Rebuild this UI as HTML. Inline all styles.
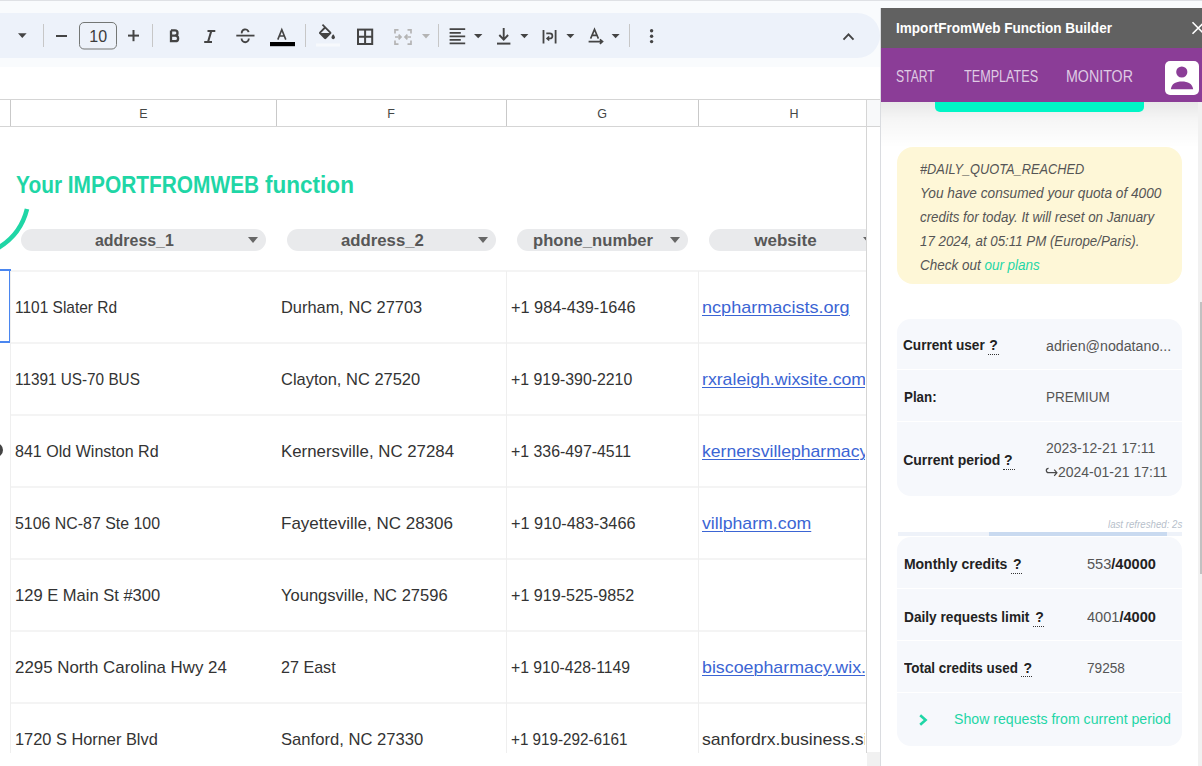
<!DOCTYPE html>
<html><head><meta charset="utf-8">
<style>
html,body{margin:0;padding:0}
body{width:1202px;height:766px;position:relative;overflow:hidden;background:#fff;font-family:"Liberation Sans",sans-serif;}
.a{position:absolute}
.t{position:absolute;white-space:nowrap;line-height:1;transform-origin:0 0}
.ic{position:absolute;overflow:visible}
.hl{position:absolute;height:2px;background:#f4f4f4}
.vl{position:absolute;width:1px;background:#efefef}
.lnk{text-decoration:underline;text-decoration-thickness:1px;text-underline-offset:2px}
.pill{position:absolute;top:229px;height:22px;border-radius:11px;background:#e9eaec}
.ptri{position:absolute;top:237px;width:0;height:0;border-left:5.5px solid transparent;border-right:5.5px solid transparent;border-top:6px solid #666}
</style></head>
<body>
<div class="a" style="left:0;top:0;width:1202px;height:67px;background:#f9fbfd"></div>
<div class="a" style="left:0;top:0;width:1202px;height:1px;background:#dfe1e5"></div>
<div class="a" style="left:-40px;top:13px;width:920px;height:45px;border-radius:23px;background:#edf2fa"></div>
<svg class="ic" style="left:0;top:0" width="880" height="67" viewBox="0 0 880 67">
<g fill="#444">
<polygon points="18,33.2 26.6,33.2 22.3,38"/>
<rect x="56" y="35" width="11" height="2"/>
<rect x="128" y="34.6" width="11" height="2"/>
<rect x="132.5" y="30" width="2" height="11.2"/>
<polygon points="474,34 482.4,34 478.2,38.2"/>
<polygon points="520.4,34 528.4,34 524.4,38.2"/>
<polygon points="566.4,34 574.4,34 570.4,38.2"/>
<polygon points="611.6,34 619.6,34 615.6,38.2"/>
<circle cx="651.6" cy="30.8" r="1.7"/><circle cx="651.6" cy="36.2" r="1.7"/><circle cx="651.6" cy="41.6" r="1.7"/>
</g>
<g fill="#c7c7c7"><rect x="43" y="24" width="1" height="23"/><rect x="152" y="24" width="1" height="23"/><rect x="305" y="24" width="1" height="23"/><rect x="438" y="24" width="1" height="23"/><rect x="629" y="24" width="1" height="23"/></g>
<rect x="79.5" y="22.5" width="37" height="26.5" rx="4.5" fill="none" stroke="#747775" stroke-width="1"/>
<text x="89.3" y="41.6" font-family="Liberation Sans" font-size="16" fill="#3c3c3c">10</text>
<g fill="none" stroke="#444" stroke-width="2.3">
<path d="M171 30.4 V41.1 H175.4 A2.72 2.72 0 0 0 175.4 35.65 H171 M171 30.4 H174.9 A2.62 2.62 0 0 1 174.9 35.65"/>
</g>
<g fill="none" stroke="#444" stroke-width="2">
<path d="M207.5 30.9 H215.3 M204.2 42.1 H212 M211.3 30.9 L208 42.1"/>
<path d="M236.3 35.6 H254.5" stroke-width="1.8"/>
<path d="M241.8 33.4 A3.4 3.3 0 0 1 248.6 32.2" stroke-width="1.9"/>
<path d="M241.6 38.6 A3.6 3.6 0 0 0 248.8 38.6" stroke-width="1.9"/>
<path d="M277.8 39.6 L281.8 29.6 L285.8 39.6 M279.3 36 H284.3" stroke-width="1.6"/>
<rect x="358" y="29.6" width="14.2" height="14.4" />
<path d="M365.1 29.6 V44 M358 36.8 H372.2"/>
<path d="M449.6 29.2 H465.2 M449.6 32.8 H460.8 M449.6 36.3 H465.2 M449.6 39.8 H460.8 M449.6 43.3 H465.2" stroke-width="1.8"/>
<path d="M503.7 28 V39.5 M499.3 35 L503.7 39.6 L508.1 35" stroke-width="1.9"/>
<path d="M497 43.6 H510.4" stroke-width="2"/>
<path d="M543.5 30 V43.4 M555.6 30 V43.4" stroke-width="1.8"/>
<path d="M546.3 33.3 H549.8 A2.6 2.6 0 0 1 549.8 38.5 H547.2 M549.2 36.5 L547.1 38.5 L549.2 40.5" stroke-width="1.7"/>
<path d="M590.6 38.6 L594.5 29.4 L598.4 38.6 M592 35.4 H597" stroke-width="1.6"/>
<path d="M588.6 41.6 H602.2 M599.9 39.3 L602.5 41.6 L599.9 43.9" stroke-width="1.7"/>
<path d="M843.5 39.6 L848.5 34.4 L853.5 39.6" stroke-width="1.9"/>
</g>
<rect x="270" y="42" width="25" height="4.2" fill="#000"/>
<rect x="316" y="43.5" width="24" height="3" fill="#f7f9fc"/>
<g transform="translate(316.3,24) scale(0.89)" fill="#444"><path d="M16.56 8.94L7.62 0 6.21 1.41l2.38 2.38-5.15 5.15c-.59.59-.59 1.54 0 2.12l5.5 5.5c.29.29.68.44 1.06.44s.77-.15 1.06-.44l5.5-5.5c.59-.58.59-1.53 0-2.12zM5.21 10L10 5.21 14.79 10H5.21zM19 11.5s-2 2.17-2 3.5c0 1.1.9 2 2 2s2-.9 2-2c0-1.33-2-3.5-2-3.5z"/></g>
<g fill="none" stroke="#b4b4b4" stroke-width="1.7">
<path d="M398.5 29.8 H395 V33.5 M395 40.5 V44.2 H398.5 M407.5 29.8 H411 V33.5 M411 40.5 V44.2 H407.5"/>
<path d="M395 37 H401 M398.6 34.6 L401 37 L398.6 39.4 M411 37 H405 M407.4 34.6 L405 37 L407.4 39.4"/>
</g>
<polygon points="422,34 430,34 426,38.4" fill="#b4b4b4"/>
</svg>
<div class="a" style="left:0;top:99px;width:880px;height:1px;background:#d5d5d5"></div>
<div class="a" style="left:0;top:126px;width:880px;height:1px;background:#d5d5d5"></div>
<div class="a" style="left:867px;top:100px;width:13px;height:26px;background:#f8f9fa"></div>
<div class="a" style="left:10px;top:100px;width:1px;height:26px;background:#c9c9c9"></div>
<div class="a" style="left:276px;top:100px;width:1px;height:26px;background:#c9c9c9"></div>
<div class="a" style="left:506px;top:100px;width:1px;height:26px;background:#c9c9c9"></div>
<div class="a" style="left:698px;top:100px;width:1px;height:26px;background:#c9c9c9"></div>
<div class="a" style="left:866px;top:100px;width:1px;height:653px;background:#d5d5d5"></div>
<div class="a" style="left:867px;top:752px;width:13px;height:14px;background:#f1f1f1"></div>
<div class="a" style="left:93.5px;top:107.5px;width:100px;text-align:center;font-size:12.5px;line-height:1;color:#444746">E</div>
<div class="a" style="left:341px;top:107.5px;width:100px;text-align:center;font-size:12.5px;line-height:1;color:#444746">F</div>
<div class="a" style="left:552px;top:107.5px;width:100px;text-align:center;font-size:12.5px;line-height:1;color:#444746">G</div>
<div class="a" style="left:744px;top:107.5px;width:100px;text-align:center;font-size:12.5px;line-height:1;color:#444746">H</div>
<div class="a" style="left:0;top:127px;width:866px;height:626px;overflow:hidden">
<div class="a" style="left:0;top:-127px;width:866px;height:766px">
<svg class="ic" style="left:0;top:180px" width="60" height="90" viewBox="0 180 60 90"><path d="M27 209 A62.5 62.5 0 0 1 -3 248.5" fill="none" stroke="#1fd6a6" stroke-width="4.6"/></svg>
<div class="t" style="left:15.70px;top:173.74px;font-size:22px;color:#1fd6a6;font-weight:bold;transform:scale(0.9490,1.0700);">Your IMPORTFROMWEB</div>
<div class="t" style="left:265.00px;top:173.74px;font-size:22px;color:#1fd6a6;font-weight:bold;transform:scale(1.0250,1.0700);">function</div>
<div class="pill" style="left:21px;width:245px"></div>
<div class="t" style="left:94.55px;top:232.20px;font-size:17px;color:#575757;font-weight:bold;transform:scale(0.9370,1.0000);">address_1</div>
<div class="ptri" style="left:247.5px"></div>
<div class="pill" style="left:287px;width:209px"></div>
<div class="t" style="left:340.53px;top:232.20px;font-size:17px;color:#575757;font-weight:bold;transform:scale(0.9850,1.0000);">address_2</div>
<div class="ptri" style="left:477.5px"></div>
<div class="pill" style="left:517px;width:171px"></div>
<div class="t" style="left:533.10px;top:232.20px;font-size:17px;color:#575757;font-weight:bold;transform:scale(0.9780,1.0000);">phone_number</div>
<div class="ptri" style="left:669.5px"></div>
<div class="pill" style="left:709px;width:172px"></div>
<div class="t" style="left:754.30px;top:232.20px;font-size:17px;color:#575757;font-weight:bold;">website</div>
<div class="ptri" style="left:862.5px"></div>
<div class="a" style="left:-10px;top:269px;width:19px;height:70px;border:2px solid #4a86f0;border-left:none"></div>
<div class="a" style="left:-11px;top:443px;width:14px;height:14px;border-radius:50%;background:#444"></div>
<div class="hl" style="left:11px;top:270px;width:855px"></div>
<div class="hl" style="left:11px;top:342px;width:855px"></div>
<div class="hl" style="left:11px;top:414px;width:855px"></div>
<div class="hl" style="left:11px;top:486px;width:855px"></div>
<div class="hl" style="left:11px;top:558px;width:855px"></div>
<div class="hl" style="left:11px;top:630px;width:855px"></div>
<div class="hl" style="left:11px;top:702px;width:855px"></div>
<div class="vl" style="left:10px;top:271px;height:482px"></div>
<div class="vl" style="left:506px;top:271px;height:482px"></div>
<div class="vl" style="left:698px;top:271px;height:482px"></div>
<div class="t" style="left:14.50px;top:299.00px;font-size:17px;color:#333333;transform:scale(0.9100,1.0000);">1101 Slater Rd</div>
<div class="t" style="left:281.00px;top:299.00px;font-size:17px;color:#333333;transform:scale(0.9640,1.0000);">Durham, NC 27703</div>
<div class="t" style="left:510.50px;top:299.00px;font-size:17px;color:#333333;transform:scale(0.9580,1.0000);">+1 984-439-1646</div>
<div class="a" style="left:698px;top:0;width:167px;height:766px;overflow:hidden"><div class="a" style="left:-698px;top:0;width:866px;height:766px">
<div class="t lnk" style="left:702.40px;top:299.00px;font-size:17px;color:#3b65d4;transform:scale(1.0630,1.0000);">ncpharmacists.org</div>
</div></div>
<div class="t" style="left:14.50px;top:371.00px;font-size:17px;color:#333333;transform:scale(0.9010,1.0000);">11391 US-70 BUS</div>
<div class="t" style="left:281.00px;top:371.00px;font-size:17px;color:#333333;transform:scale(0.9690,1.0000);">Clayton, NC 27520</div>
<div class="t" style="left:510.50px;top:371.00px;font-size:17px;color:#333333;transform:scale(0.9330,1.0000);">+1 919-390-2210</div>
<div class="a" style="left:698px;top:0;width:167px;height:766px;overflow:hidden"><div class="a" style="left:-698px;top:0;width:866px;height:766px">
<div class="t lnk" style="left:702.40px;top:371.00px;font-size:17px;color:#3b65d4;transform:scale(1.0400,1.0000);">rxraleigh.wixsite.com</div>
</div></div>
<div class="t" style="left:14.50px;top:443.00px;font-size:17px;color:#333333;transform:scale(0.9440,1.0000);">841 Old Winston Rd</div>
<div class="t" style="left:281.00px;top:443.00px;font-size:17px;color:#333333;transform:scale(0.9900,1.0000);">Kernersville, NC 27284</div>
<div class="t" style="left:510.50px;top:443.00px;font-size:17px;color:#333333;transform:scale(0.9330,1.0000);">+1 336-497-4511</div>
<div class="a" style="left:698px;top:0;width:167px;height:766px;overflow:hidden"><div class="a" style="left:-698px;top:0;width:866px;height:766px">
<div class="t lnk" style="left:702.40px;top:443.00px;font-size:17px;color:#3b65d4;transform:scale(1.0350,1.0000);">kernersvillepharmacy.com</div>
</div></div>
<div class="t" style="left:14.50px;top:515.00px;font-size:17px;color:#333333;transform:scale(0.9360,1.0000);">5106 NC-87 Ste 100</div>
<div class="t" style="left:281.00px;top:515.00px;font-size:17px;color:#333333;">Fayetteville, NC 28306</div>
<div class="t" style="left:510.50px;top:515.00px;font-size:17px;color:#333333;transform:scale(0.9580,1.0000);">+1 910-483-3466</div>
<div class="a" style="left:698px;top:0;width:167px;height:766px;overflow:hidden"><div class="a" style="left:-698px;top:0;width:866px;height:766px">
<div class="t lnk" style="left:702.40px;top:515.00px;font-size:17px;color:#3b65d4;transform:scale(1.0420,1.0000);">villpharm.com</div>
</div></div>
<div class="t" style="left:14.50px;top:587.00px;font-size:17px;color:#333333;transform:scale(0.9720,1.0000);">129 E Main St #300</div>
<div class="t" style="left:281.00px;top:587.00px;font-size:17px;color:#333333;transform:scale(0.9720,1.0000);">Youngsville, NC 27596</div>
<div class="t" style="left:510.50px;top:587.00px;font-size:17px;color:#333333;transform:scale(0.9470,1.0000);">+1 919-525-9852</div>
<div class="t" style="left:14.50px;top:659.00px;font-size:17px;color:#333333;transform:scale(0.9920,1.0000);">2295 North Carolina Hwy 24</div>
<div class="t" style="left:281.00px;top:659.00px;font-size:17px;color:#333333;transform:scale(0.9480,1.0000);">27 East</div>
<div class="t" style="left:510.50px;top:659.00px;font-size:17px;color:#333333;transform:scale(0.9250,1.0000);">+1 910-428-1149</div>
<div class="a" style="left:698px;top:0;width:167px;height:766px;overflow:hidden"><div class="a" style="left:-698px;top:0;width:866px;height:766px">
<div class="t lnk" style="left:702.40px;top:659.00px;font-size:17px;color:#3b65d4;transform:scale(1.0480,1.0000);">biscoepharmacy.wix.com</div>
</div></div>
<div class="t" style="left:14.50px;top:731.00px;font-size:17px;color:#333333;transform:scale(0.9620,1.0000);">1720 S Horner Blvd</div>
<div class="t" style="left:281.00px;top:731.00px;font-size:17px;color:#333333;transform:scale(0.9770,1.0000);">Sanford, NC 27330</div>
<div class="t" style="left:510.50px;top:731.00px;font-size:17px;color:#333333;transform:scale(0.8960,1.0000);">+1 919-292-6161</div>
<div class="a" style="left:698px;top:0;width:167px;height:766px;overflow:hidden"><div class="a" style="left:-698px;top:0;width:866px;height:766px">
<div class="t" style="left:702.40px;top:731.00px;font-size:17px;color:#333333;transform:scale(1.0370,1.0000);">sanfordrx.business.site</div>
</div></div>
</div></div>
<div class="a" style="left:880px;top:8px;width:1px;height:758px;background:#dadce0"></div>
<div class="a" style="left:881px;top:8px;width:321px;height:758px;background:#fff;overflow:hidden">
<div class="a" style="left:-881px;top:-8px;width:1202px;height:766px">
<div class="a" style="left:881px;top:102px;width:317px;height:46px;background:linear-gradient(to bottom,rgba(0,0,0,0.09),rgba(0,0,0,0.035) 40%,rgba(0,0,0,0) 100%)"></div>
<div class="a" style="left:935px;top:90px;width:209px;height:22px;border-radius:5px;background:#00f5c6"></div>
<div class="a" style="left:897px;top:147px;width:285px;height:137px;border-radius:16px;background:#fef7d7"></div>
<div class="t" style="left:919.60px;top:160.80px;font-size:15px;color:#555;font-style:italic;transform:scale(0.8530,1.0000);">#DAILY_QUOTA_REACHED</div>
<div class="t" style="left:919.60px;top:184.80px;font-size:15px;color:#555;font-style:italic;transform:scale(0.9100,1.0000);">You have consumed your quota of 4000</div>
<div class="t" style="left:919.60px;top:208.80px;font-size:15px;color:#555;font-style:italic;transform:scale(0.8900,1.0000);">credits for today. It will reset on January</div>
<div class="t" style="left:919.60px;top:232.80px;font-size:15px;color:#555;font-style:italic;transform:scale(0.8870,1.0000);">17 2024, at 05:11 PM (Europe/Paris).</div>
<div class="t" style="left:919.60px;top:256.80px;font-size:15px;color:#555;font-style:italic;transform:scale(0.8980,1.0000);">Check out <span style="color:#1fd6a6">our plans</span></div>
<div class="a" style="left:897px;top:319px;width:285px;height:177px;border-radius:14px;background:#f6f8fc;overflow:hidden">
<div class="a" style="left:0;top:50px;width:285px;height:1px;background:#fff"></div>
<div class="a" style="left:0;top:102px;width:285px;height:1px;background:#fff"></div>
</div>
<div class="t" style="left:903.00px;top:338.10px;font-size:14px;color:#222;font-weight:bold;transform:scale(0.9730,1.0000);">Current user</div>
<div class="t" style="left:989.20px;top:338.10px;font-size:14px;color:#222;font-weight:bold;">?</div>
<div class="a" style="left:988px;top:353.9px;width:11px;height:0;border-top:1px dotted #333"></div>
<div class="t" style="left:1046.00px;top:338.50px;font-size:14px;color:#555;transform:scale(1.0160,1.0000);">adrien@nodatano...</div>
<div class="t" style="left:903.50px;top:390.20px;font-size:14px;color:#222;font-weight:bold;transform:scale(0.9520,1.0000);">Plan:</div>
<div class="t" style="left:1046.00px;top:390.20px;font-size:14px;color:#555;transform:scale(0.9650,1.0000);">PREMIUM</div>
<div class="t" style="left:903.20px;top:452.90px;font-size:14px;color:#222;font-weight:bold;">Current period</div>
<div class="t" style="left:1004.00px;top:452.90px;font-size:14px;color:#222;font-weight:bold;">?</div>
<div class="a" style="left:1002.7px;top:468.7px;width:12px;height:0;border-top:1px dotted #333"></div>
<div class="t" style="left:1046.00px;top:440.80px;font-size:14px;color:#555;transform:scale(0.9990,1.0000);">2023-12-21 17:11</div>
<svg class="ic" style="left:1045px;top:466px" width="14" height="12" viewBox="0 0 14 12"><path d="M3.6 2.3 A2.2 2.2 0 0 0 3.4 6.7 H11.6 M9.2 3.6 L11.9 6.7 L9.2 9.8" fill="none" stroke="#4a4a4a" stroke-width="1.25"/></svg>
<div class="t" style="left:1058.00px;top:465.00px;font-size:14px;color:#555;transform:scale(0.9990,1.0000);">2024-01-21 17:11</div>
<div class="t" style="left:1107.50px;top:518.60px;font-size:11px;color:#b7bfcb;font-style:italic;transform:scale(0.8800,1.0000);">last refreshed: 2s</div>
<div class="a" style="left:898px;top:532px;width:284px;height:4px;background:#eef2f9"></div>
<div class="a" style="left:988.6px;top:532px;width:178.4px;height:4px;background:#c9daf0"></div>
<div class="a" style="left:897px;top:536.5px;width:285px;height:209px;border-radius:14px;background:#f6f8fc;overflow:hidden">
<div class="a" style="left:0;top:51px;width:285px;height:1px;background:#fff"></div>
<div class="a" style="left:0;top:103px;width:285px;height:1px;background:#fff"></div>
<div class="a" style="left:0;top:155px;width:285px;height:1px;background:#fff"></div>
</div>
<div class="t" style="left:903.90px;top:557.20px;font-size:14px;color:#222;font-weight:bold;">Monthly credits</div>
<div class="t" style="left:1013.00px;top:557.20px;font-size:14px;color:#222;font-weight:bold;">?</div>
<div class="a" style="left:1011px;top:573.0px;width:11px;height:0;border-top:1px dotted #333"></div>
<div class="t" style="left:1086.50px;top:557.20px;font-size:14px;color:#555;transform:scale(1.0400,1.0000);">553<b style="color:#222">/40000</b></div>
<div class="t" style="left:903.90px;top:609.70px;font-size:14px;color:#222;font-weight:bold;transform:scale(0.9770,1.0000);">Daily requests limit</div>
<div class="t" style="left:1035.20px;top:609.70px;font-size:14px;color:#222;font-weight:bold;">?</div>
<div class="a" style="left:1033px;top:625.5px;width:11px;height:0;border-top:1px dotted #333"></div>
<div class="t" style="left:1086.50px;top:609.70px;font-size:14px;color:#555;transform:scale(1.0400,1.0000);">4001<b style="color:#222">/4000</b></div>
<div class="t" style="left:903.90px;top:660.50px;font-size:14px;color:#222;font-weight:bold;transform:scale(0.9590,1.0000);">Total credits used</div>
<div class="t" style="left:1023.50px;top:660.50px;font-size:14px;color:#222;font-weight:bold;">?</div>
<div class="a" style="left:1021px;top:676.3px;width:11px;height:0;border-top:1px dotted #333"></div>
<div class="t" style="left:1086.50px;top:660.50px;font-size:14px;color:#555;transform:scale(0.9750,1.0000);">79258</div>
<svg class="ic" style="left:915px;top:710px" width="16" height="20" viewBox="0 0 16 20"><path d="M5.2 5.2 L10.6 10 L5.2 14.8" fill="none" stroke="#1fd6a6" stroke-width="2.6"/></svg>
<div class="t" style="left:953.50px;top:711.40px;font-size:15px;color:#1fd6a6;transform:scale(0.9420,1.0000);">Show requests from current period</div>
<div class="a" style="left:1198px;top:102px;width:4px;height:664px;background:#f1f1f1"></div>
<div class="a" style="left:1200px;top:302px;width:2px;height:272px;background:#c1c1c1"></div>
<div class="a" style="left:881px;top:8px;width:321px;height:40px;background:#616161"></div>
<div class="a" style="left:881px;top:48px;width:321px;height:54px;background:#8b3d97"></div>
<div class="t" style="left:895.50px;top:19.50px;font-size:15px;color:#fff;font-weight:bold;transform:scale(0.9040,1.0000);">ImportFromWeb Function Builder</div>
<svg class="ic" style="left:1185px;top:16px" width="30" height="24" viewBox="1185 16 30 24"><path d="M1192.5 22.3 L1204 33.8 M1204 22.3 L1192.5 33.8" stroke="#fff" stroke-width="1.6" fill="none"/></svg>
<div class="t" style="left:896.00px;top:67.60px;font-size:16.5px;color:#dfcbe4;transform:scale(0.7370,1.0000);">START</div>
<div class="t" style="left:963.50px;top:67.60px;font-size:16.5px;color:#dfcbe4;transform:scale(0.7650,1.0000);">TEMPLATES</div>
<div class="t" style="left:1066.30px;top:67.60px;font-size:16.5px;color:#dfcbe4;transform:scale(0.8620,1.0000);">MONITOR</div>
<div class="a" style="left:1165px;top:60.5px;width:34px;height:34px;border-radius:5px;background:#fff"></div>
<svg class="ic" style="left:1165px;top:60px" width="34" height="35" viewBox="0 0 34 35"><circle cx="16.8" cy="12" r="5.6" fill="#8b3d97"/><path d="M5.8 29.3 C6.5 23.5 11 21.4 16.9 21.4 C22.8 21.4 27.4 23.5 28.2 29.3 Z" fill="#8b3d97"/></svg>
</div></div>
</body></html>
